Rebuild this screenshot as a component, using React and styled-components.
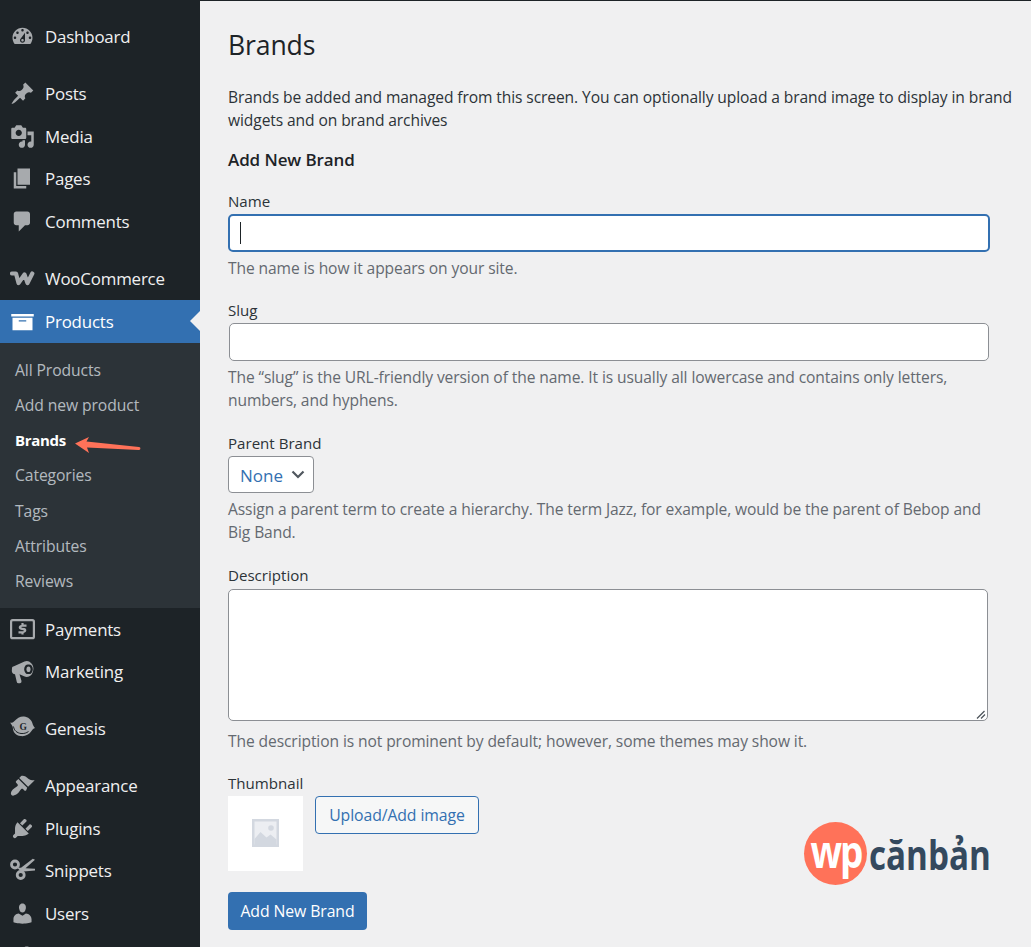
import React from "react";
import styled, { createGlobalStyle } from "styled-components";

const Global = createGlobalStyle`
  html, body { margin: 0; padding: 0; height: 947px; overflow: hidden; background: #f0f0f1; }
  body { font-family: "Open Sans", "Noto Sans", sans-serif; }
  * { box-sizing: border-box; }
`;

const Page = styled.div`
  display: flex;
  width: 1031px;
  height: 947px;
  overflow: hidden;
  position: relative;
`;
const Sidebar = styled.nav`
  width: 200px;
  flex: none;
  background: #1d2327;
  padding-top: 15.5px;
`;
const MenuItem = styled.div`
  position: relative;
  display: flex;
  align-items: center;
  height: ${p => (p.$current ? 43 : 42.7)}px;
  margin-top: ${p => p.$gap || 0}px;
  background: ${p => (p.$current ? "#3370b1" : "transparent")};
  color: ${p => (p.$current ? "#fff" : "#f0f0f1")};
  font-size: 16.9px;
  letter-spacing: -0.2px;
`;
const IconSlot = styled.span`
  width: 45px;
  flex: none;
  display: flex;
  justify-content: center;
  color: ${p => (p.$current ? "#fff" : "#a7aaad")};
  svg { display: block; width: 25px; height: 25px; fill: currentColor; }
`;
const Notch = styled.span`
  position: absolute;
  right: 0;
  top: 50%;
  margin-top: -10px;
  border: 10px solid transparent;
  border-right-color: #f0f0f1;
  border-left-width: 0;
`;
const Submenu = styled.div`
  background: #2c3338;
  padding: 10px 0;
  height: 265px;
`;
const SubItem = styled.div`
  height: 35.2px;
  line-height: 35.2px;
  padding-left: 15px;
  font-size: ${p => (p.$current ? 15 : 15.7)}px;
  letter-spacing: ${p => (p.$current ? -0.3 : -0.1)}px;
  font-weight: ${p => (p.$current ? 700 : 400)};
  color: ${p => (p.$current ? "#fff" : "rgba(240,246,252,.7)")};
`;
const Main = styled.main`
  flex: 1;
  min-width: 0;
  border-top: 1px solid #1d2327;
  padding-left: 28px;
  color: #2c3338;
`;
const Title = styled.h1`
  margin: 24px 0 0;
  font-size: 26.6px;
  line-height: 41px;
  font-weight: 400;
  color: #1d2327;
  letter-spacing: -0.15px;
`;
const Intro = styled.p`
  margin: 20.2px 0 0;
  width: 795px;
  font-size: 15.6px;
  line-height: 23px;
  letter-spacing: -0.1px;
`;
const Subtitle = styled.h2`
  margin: 15.4px 0 0;
  font-size: 17px;
  line-height: 24px;
  font-weight: 600;
  color: #1d2327;
  letter-spacing: -0.1px;
`;
const Field = styled.div`
  margin-top: ${p => p.$top}px;
`;
const Label = styled.label`
  display: block;
  font-size: 15.1px;
  line-height: 21px;
  color: #2c3338;
`;
const TextInput = styled.div`
  position: relative;
  margin: 2px 0 0 ${p => (p.$focus ? 0 : 1)}px;
  width: ${p => (p.$focus ? 762 : 760)}px;
  height: 38px;
  background: #fff;
  border: ${p => (p.$focus ? "2.5px solid #3370b1" : "1.25px solid #8c8f94")};
  border-radius: 5px;
`;
const Caret = styled.span`
  position: absolute;
  left: 10px;
  top: 6px;
  width: 1.25px;
  height: 22px;
  background: #1d2327;
`;
const Hint = styled.p`
  margin: ${p => p.$top ?? 5}px 0 0;
  width: 775px;
  font-size: 15.6px;
  line-height: 23px;
  letter-spacing: -0.1px;
  color: #646970;
`;
const Select = styled.div`
  margin-top: 2px;
  width: 86px;
  height: 37px;
  display: flex;
  align-items: center;
  justify-content: space-between;
  padding: 2px 8px 0 11px;
  background: #fff;
  border: 1.25px solid #8c8f94;
  border-radius: 4px;
  color: #3370b1;
  font-size: 17px;
  svg { width: 14px; height: 14px; display: block; margin-top: -3px; }
`;
const TextArea = styled.div`
  position: relative;
  margin-top: 3px;
  width: 760px;
  height: 132px;
  background: #fff;
  border: 1.25px solid #8c8f94;
  border-radius: 5px;
`;
const Grip = styled.svg`
  position: absolute;
  right: 1px;
  bottom: 1px;
  width: 10px;
  height: 10px;
`;
const ThumbRow = styled.div`
  display: flex;
  align-items: flex-start;
  gap: 12px;
  margin-top: 2px;
`;
const Thumb = styled.div`
  width: 75px;
  height: 75px;
  background: #fff;
  display: flex;
  align-items: center;
  justify-content: center;
  svg { width: 27px; height: 28px; display: block; }
`;
const OutlineButton = styled.button`
  width: 164px;
  height: 38px;
  padding: 0;
  background: #f6f7f7;
  border: 1.25px solid #3370b1;
  border-radius: 4px;
  color: #3370b1;
  font-family: inherit;
  font-size: 15.8px;
  letter-spacing: -0.1px;
`;
const PrimaryButton = styled.button`
  display: block;
  margin-top: 21px;
  width: 139px;
  height: 38px;
  padding: 0;
  background: #3370b1;
  border: 0;
  border-radius: 4px;
  color: #fff;
  font-family: inherit;
  font-size: 15.8px;
  letter-spacing: -0.1px;
`;
const Arrow = styled.svg`
  position: absolute;
  left: 74px;
  top: 434px;
  width: 70px;
  height: 22px;
`;
const Logo = styled.div`
  position: absolute;
  left: 804px;
  top: 822px;
  display: flex;
  align-items: center;
  gap: 2px;
`;
const LogoBadge = styled.div`
  width: 63px;
  height: 63px;
  border-radius: 50%;
  background: #ff7259;
  color: #fff;
  font: 700 45px/58px "Open Sans", sans-serif;
  letter-spacing: -2.5px;
  text-align: center;
  white-space: nowrap;
  span { display: inline-block; transform: scaleX(.82); }
`;
const LogoWord = styled.div`
  color: #34495e;
  font: 700 42px/63px "Open Sans", sans-serif;
  white-space: nowrap;
  width: 122px;
  span { display: inline-block; transform: scaleX(.79); transform-origin: 0 50%; }
`;

const I = {
  dashboard: <svg viewBox="0 0 20 20"><path d="M3.76 16h12.48c1.1-1.37 1.76-3.11 1.76-5 0-4.42-3.58-8-8-8s-8 3.58-8 8c0 1.89.66 3.63 1.76 5zM10 4c.55 0 1 .45 1 1s-.45 1-1 1-1-.45-1-1 .45-1 1-1zM6 6c.55 0 1 .45 1 1s-.45 1-1 1-1-.45-1-1 .45-1 1-1zm8 0c.55 0 1 .45 1 1s-.45 1-1 1-1-.45-1-1 .45-1 1-1zm-5.37 5.55L12 7v6c0 1.1-.9 2-2 2s-2-.9-2-2c0-.57.24-1.08.63-1.45zM4 10c.55 0 1 .45 1 1s-.45 1-1 1-1-.45-1-1 .45-1 1-1zm12 0c.55 0 1 .45 1 1s-.45 1-1 1-1-.45-1-1 .45-1 1-1zm-5 3c0-.55-.45-1-1-1s-1 .45-1 1 .45 1 1 1 1-.45 1-1z" fillRule="evenodd"/></svg>,
  post: <svg viewBox="0 0 20 20"><path d="M10.44 3.02l1.82-1.82 6.36 6.35-1.83 1.82c-1.05-.68-2.48-.57-3.41.36l-.75.75c-.92.93-1.04 2.35-.35 3.41l-1.83 1.82-2.41-2.41-2.8 2.79c-.42.42-3.38 2.71-3.8 2.29s1.86-3.39 2.28-3.81l2.79-2.79L4.1 9.36l1.83-1.82c1.05.69 2.48.57 3.4-.36l.75-.75c.93-.92 1.05-2.35.36-3.41z"/></svg>,
  media: <svg viewBox="0 0 20 20"><path fillRule="evenodd" d="M13 11V4c0-.55-.45-1-1-1h-1.67L9 1H5L3.67 3H2c-.55 0-1 .45-1 1v7c0 .55.45 1 1 1h10c.55 0 1-.45 1-1zM7 4.5c1.38 0 2.5 1.12 2.5 2.5S8.38 9.5 7 9.5 4.5 8.38 4.5 7 5.62 4.5 7 4.5zM14 6h5v10.5c0 1.38-1.12 2.5-2.5 2.5S14 17.88 14 16.5s1.12-2.5 2.5-2.5c.17 0 .34.02.5.05V9h-3V6zm-4 8.05V13h2v3.5c0 1.38-1.12 2.5-2.5 2.5S7 17.88 7 16.5 8.12 14 9.5 14c.17 0 .34.02.5.05z"/></svg>,
  page: <svg viewBox="0 0 20 20"><path d="M6 15V2h10v13H6zm-1 1h8v2H3V5h2v11z"/></svg>,
  comments: <svg viewBox="0 0 20 20"><path d="M5 2h9c1.1 0 2 .9 2 2v7c0 1.1-.9 2-2 2h-2l-5 5v-5H5c-1.1 0-2-.9-2-2V4c0-1.1.9-2 2-2z"/></svg>,
  woo: <svg viewBox="0 0 25 25"><path d="M2 7.500H6L8.500 17L14.500 8.500L17.500 17L22.300 7.500" fill="none" stroke="currentColor" strokeWidth="4.200" strokeLinejoin="round" strokeLinecap="round"/></svg>,
  archive: <svg viewBox="0 0 20 20"><path d="M19 4v2H1V4h18zM2 7h16v10H2V7zm11 3V9H7v1h6z" fillRule="evenodd"/></svg>,
  payments: <svg viewBox="0 0 25 25"><rect x="1.100" y="3.200" width="22.800" height="18" rx="1.500" fill="none" stroke="currentColor" strokeWidth="2.200"/><path d="M11.400 6h2.200v1.500h2.900v2.300h-4.600c-.6 0-.6.800 0 .9l2.400.4c2.900.5 2.800 4.400-.7 4.900v1.500h-2.200V16.500H8.500v-2.300h4.800c.7 0 .7-.9 0-1l-2.500-.4c-2.800-.5-2.800-4.300.6-4.700z"/></svg>,
  marketing: <svg viewBox="0 0 25 25"><path fillRule="evenodd" d="M2 9C2 8 3 7.500 4 7.300L14.500 2.500Q18.500 1.200 21 4Q24 7 23.300 11Q22.500 16 19 17.500Q16.500 18.500 14 17.200L9.500 15.300L11.500 22Q11.800 24 10 24.300H8.500Q7 24.300 6.800 23L5 15.200Q2 15 1.800 12zM18.500 5.500A3.800 4.800 0 1 0 18.500 15A3.800 4.800 0 1 0 18.500 5.500z"/><ellipse cx="18.500" cy="10.200" rx="2" ry="2.800"/></svg>,
  genesis: <svg viewBox="0 0 25 25"><path d="M0 6.500c1.500.4 2.800.2 4-1C7 2 10.500.2 14 .5c4 .4 7.500 3 8.500 7 .4 1.500 1.200 3.300 2.500 4.500-1.500.4-2.500 1.500-3.500 3-2.500 3.800-6.800 5.700-11 5-4.400-.7-7.300-3.500-7.600-7.800C3 10.500 1.500 8.500 0 6.500z"/><path d="M3.500 10.500c.5 4 3.500 6.500 7.500 7 3 .3 5.500-.5 7.500-2" fill="none" stroke="#1d2327" strokeWidth="1"/><text x="13" y="14" fontSize="9.500" fontWeight="700" textAnchor="middle" fill="#1d2327" fontFamily="Liberation Serif, serif">G</text></svg>,
  appearance: <svg viewBox="0 0 20 20"><path d="M14.48 11.06L7.41 3.99l1.5-1.5c.5-.56 2.3-.47 3.51.32 1.21.8 1.43 1.28 2.91 2.1 1.18.64 2.45 1.26 4.45.85zm-.71.71L6.7 4.7 4.93 6.47c-.39.39-.39 1.02 0 1.41l1.06 1.06c.39.39.39 1.03 0 1.42-.6.6-1.43 1.11-2.21 1.69-.35.26-.7.53-1.01.84C1.43 13.73 0 16.45 1.2 17.65s3.93-.23 5.28-1.57c.31-.31.58-.66.85-1.02.58-.78 1.08-1.61 1.68-2.21.39-.39 1.02-.39 1.41 0l1.06 1.06c.39.39 1.02.39 1.41 0z"/></svg>,
  plugins: <svg viewBox="0 0 20 20"><path d="M13.11 4.36L9.87 7.6 8 5.73l3.24-3.24c.35-.34 1.05-.2 1.56.32.52.51.66 1.21.31 1.55zm-8 1.77l.91-1.12 9.01 9.01-1.19.84c-.71.71-2.63 1.16-3.82 1.16H6.14L4.9 17.26c-.59.59-1.54.59-2.12 0-.59-.58-.59-1.53 0-2.12l1.24-1.24v-3.88c0-1.13.4-3.19 1.09-3.89zm7.26 3.97l3.24-3.24c.34-.35 1.04-.21 1.55.31.52.51.66 1.21.31 1.55l-3.24 3.25z"/></svg>,
  snippets: <svg viewBox="0 0 25 25"><g fill="none" stroke="currentColor" strokeWidth="2.800"><circle cx="5" cy="6.500" r="3.500"/><circle cx="10.700" cy="17" r="3.500"/></g><path d="M7 9.500L11 9.800L22.800.8L25 1.800L15.500 10.200L25 10.800L25.300 12.500L13.500 13.500L11.200 13.800z"/></svg>,
  users: <svg viewBox="0 0 20 20"><path d="M10 9.25c-2.27 0-2.73-3.44-2.73-3.44C7 4.02 7.82 2 9.97 2c2.16 0 2.98 2.02 2.71 3.81 0 0-.41 3.44-2.68 3.44zm0 2.57L12.72 10c2.39 0 4.52 2.33 4.52 4.53v2.49s-3.65 1.13-7.24 1.13c-3.65 0-7.24-1.13-7.24-1.13v-2.49c0-2.25 1.94-4.48 4.15-4.48z"/></svg>,
  tools: <svg viewBox="0 0 20 20"><path d="M16.68 9.77c-1.34 1.34-3.3 1.67-4.95.99l-5.41 6.52c-.99.99-2.59.99-3.58 0s-.99-2.59 0-3.57l6.52-5.42c-.68-1.65-.35-3.61.99-4.95 1.28-1.28 3.12-1.62 4.72-1.06l-2.89 2.89 2.82 2.82 2.86-2.87c.53 1.58.18 3.39-1.08 4.65z"/></svg>,
};

const Item = ({ icon, label, gap, current }) => (
  <MenuItem $gap={gap} $current={current}>
    <IconSlot $current={current}>{icon}</IconSlot>
    {label && <span>{label}</span>}
    {current && <Notch />}
  </MenuItem>
);

export default function App() {
  return (
    <Page>
      <Global />
      <Sidebar>
        <Item icon={I.dashboard} label="Dashboard" />
        <Item icon={I.post} label="Posts" gap={14} />
        <Item icon={I.media} label="Media" />
        <Item icon={I.page} label="Pages" />
        <Item icon={I.comments} label="Comments" />
        <Item icon={I.woo} label="WooCommerce" gap={14.3} />
        <Item icon={I.archive} label="Products" current />
        <Submenu>
          <SubItem>All Products</SubItem>
          <SubItem>Add new product</SubItem>
          <SubItem $current>Brands</SubItem>
          <SubItem>Categories</SubItem>
          <SubItem>Tags</SubItem>
          <SubItem>Attributes</SubItem>
          <SubItem>Reviews</SubItem>
        </Submenu>
        <Item icon={I.payments} label="Payments" />
        <Item icon={I.marketing} label="Marketing" />
        <Item icon={I.genesis} label="Genesis" gap={14} />
        <Item icon={I.appearance} label="Appearance" gap={14} />
        <Item icon={I.plugins} label="Plugins" />
        <Item icon={I.snippets} label="Snippets" />
        <Item icon={I.users} label="Users" />
        <Item icon={I.tools} />
      </Sidebar>
      <Main>
        <Title>Brands</Title>
        <Intro>Brands be added and managed from this screen. You can optionally upload a brand image to display in brand widgets and on brand archives</Intro>
        <Subtitle>Add New Brand</Subtitle>
        <Field $top={19}>
          <Label>Name</Label>
          <TextInput $focus><Caret /></TextInput>
          <Hint>The name is how it appears on your site.</Hint>
        </Field>
        <Field $top={20}>
          <Label>Slug</Label>
          <TextInput />
          <Hint>The “slug” is the URL-friendly version of the name. It is usually all lowercase and contains only letters, numbers, and hyphens.</Hint>
        </Field>
        <Field $top={21}>
          <Label>Parent Brand</Label>
          <Select>
            None
            <svg viewBox="0 0 14 14"><path d="M1.500 4.500L7 10l5.500-5.500" fill="none" stroke="#50575e" strokeWidth="2.200"/></svg>
          </Select>
          <Hint>Assign a parent term to create a hierarchy. The term Jazz, for example, would be the parent of Bebop and Big Band.</Hint>
        </Field>
        <Field $top={21}>
          <Label>Description</Label>
          <TextArea>
            <Grip viewBox="0 0 10 10"><path d="M1 9.500L8.500 2M5 9.500L9 5.500" stroke="#50575e" strokeWidth="1.300" fill="none"/></Grip>
          </TextArea>
          <Hint $top={9}>The description is not prominent by default; however, some themes may show it.</Hint>
        </Field>
        <Field $top={20}>
          <Label>Thumbnail</Label>
          <ThumbRow>
            <Thumb>
              <svg viewBox="0 0 27 28">
                <path fill="#d3d8e0" d="M0 0h27v28H0z"/>
                <path fill="#eceef2" d="M2.500 2.500h22v23h-22z"/>
                <path fill="#d3d8e0" d="M2.500 20l6-7 6 5.500 4-3 6 5v5.500h-22z"/>
                <circle cx="19" cy="9" r="2.800" fill="#d3d8e0"/>
              </svg>
            </Thumb>
            <OutlineButton>Upload/Add image</OutlineButton>
          </ThumbRow>
          <PrimaryButton>Add New Brand</PrimaryButton>
        </Field>
      </Main>
      <Arrow viewBox="0 0 70 22">
        <path d="M1 9.500L15 3l-2.500 4.500 52.500 5.500c2 .3 1.800 3-.3 3L13 13.500 15 19z" fill="#ff7259"/>
      </Arrow>
      <Logo>
        <LogoBadge><span>wp</span></LogoBadge>
        <LogoWord><span>cănbản</span></LogoWord>
      </Logo>
    </Page>
  );
}
